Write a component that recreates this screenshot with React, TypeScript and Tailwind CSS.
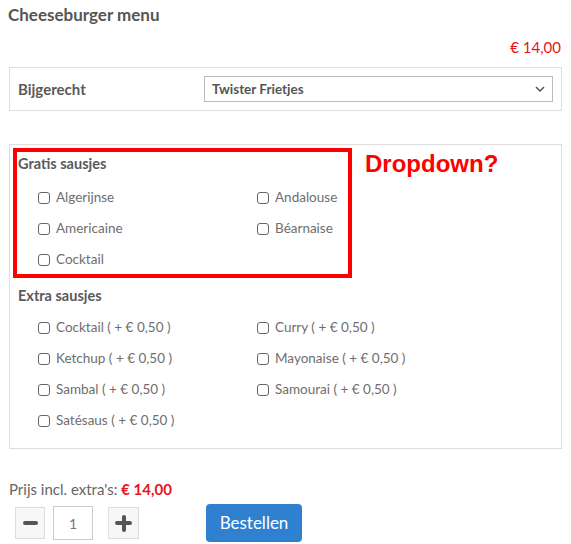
import React from "react";

const font = { fontFamily: "Lato, 'Open Sans', sans-serif" };

function Box({ label }: { label: string }) {
  return (
    <label className="flex items-center h-[31px] text-[13.5px] text-[#6e6e6e]">
      <span className="w-[12px] h-[12px] border border-[#666] rounded-[3px] mr-[6px] shrink-0" />
      <span>{label}</span>
    </label>
  );
}

function Grid({ items }: { items: string[] }) {
  return (
    <div className="grid grid-cols-[219px_1fr] pl-[20px]">
      {items.map((i) => (
        <Box key={i} label={i} />
      ))}
    </div>
  );
}

export default function App() {
  return (
    <div className="w-[571px] h-[544px] bg-white relative" style={font}>
      <div className="pl-[8px] pt-[3px] text-[17px] font-bold text-[#555] h-[26px] leading-[24px]">
        Cheeseburger menu
      </div>
      <div className="text-right pr-[10px] mt-[10px] text-[15px] text-[#e8141b] h-[22px] leading-[22px]">
        € 14,00
      </div>
      <div className="mx-[9px] mt-[9px] h-[44px] border border-[#ddd] flex items-center">
        <div className="pl-[8px] w-[194px] text-[15px] font-bold text-[#5a5a5a]">Bijgerecht</div>
        <div className="w-[349px] h-[26px] border border-[#bbb] flex items-center justify-between px-[7px]">
          <span className="text-[13.5px] font-bold text-[#555]">Twister Frietjes</span>
          <svg width="10" height="6" viewBox="0 0 10 6">
            <path d="M1 1 L5 5 L9 1" fill="none" stroke="#555" strokeWidth="1.5" />
          </svg>
        </div>
      </div>
      <div className="relative mx-[9px] mt-[33px] h-[305px] border border-[#ddd] pl-[8px] pt-[8px]">
        <div className="text-[14.5px] font-bold text-[#5a5a5a] h-[22px] leading-[22px]">Gratis sausjes</div>
        <div className="mt-[7px]">
          <Grid items={["Algerijnse", "Andalouse", "Americaine", "Béarnaise", "Cocktail"]} />
        </div>
        <div className="mt-[10px] text-[14.5px] font-bold text-[#5a5a5a] h-[22px] leading-[22px]">Extra sausjes</div>
        <div className="mt-[5px]">
          <Grid
            items={[
              "Cocktail ( + € 0,50 )",
              "Curry ( + € 0,50 )",
              "Ketchup ( + € 0,50 )",
              "Mayonaise ( + € 0,50 )",
              "Sambal ( + € 0,50 )",
              "Samourai ( + € 0,50 )",
              "Satésaus ( + € 0,50 )",
            ]}
          />
        </div>
        <div className="absolute left-[3px] top-[3px] w-[339px] h-[130px] border-[4px] border-[#ff0000]" />
        <div
          className="absolute left-[355px] top-[6px] text-[24px] font-bold text-[#ff0000] leading-[26px]"
          style={{ fontFamily: "'Liberation Sans', Arial, sans-serif" }}
        >
          Dropdown?
        </div>
      </div>
      <div className="pl-[9px] mt-[30px] text-[15px] text-[#666] h-[20px] leading-[20px]">
        Prijs incl. extra's: <span className="font-bold text-[#e8141b]">€ 14,00</span>
      </div>
      <div className="flex items-center pl-[15px] mt-[5px]">
        <div className="w-[30px] h-[32px] border border-[#ddd] bg-[#f7f7f7] flex items-center justify-center">
          <span className="block w-[15px] h-[4px] rounded-[2px] bg-[#555]" />
        </div>
        <div className="ml-[8px] w-[40px] h-[34px] border border-[#ccc] flex items-center justify-center text-[14px] text-[#777]">1</div>
        <div className="ml-[15px] w-[31px] h-[32px] border border-[#ddd] bg-[#f7f7f7] flex items-center justify-center relative">
          <span className="absolute w-[17px] h-[4px] rounded-[2px] bg-[#555]" />
          <span className="absolute w-[4px] h-[17px] rounded-[2px] bg-[#555]" />
        </div>
        <button className="ml-[67px] w-[96px] h-[38px] rounded-[4px] bg-[#2f81d0] text-white text-[17px]">Bestellen</button>
      </div>
    </div>
  );
}
